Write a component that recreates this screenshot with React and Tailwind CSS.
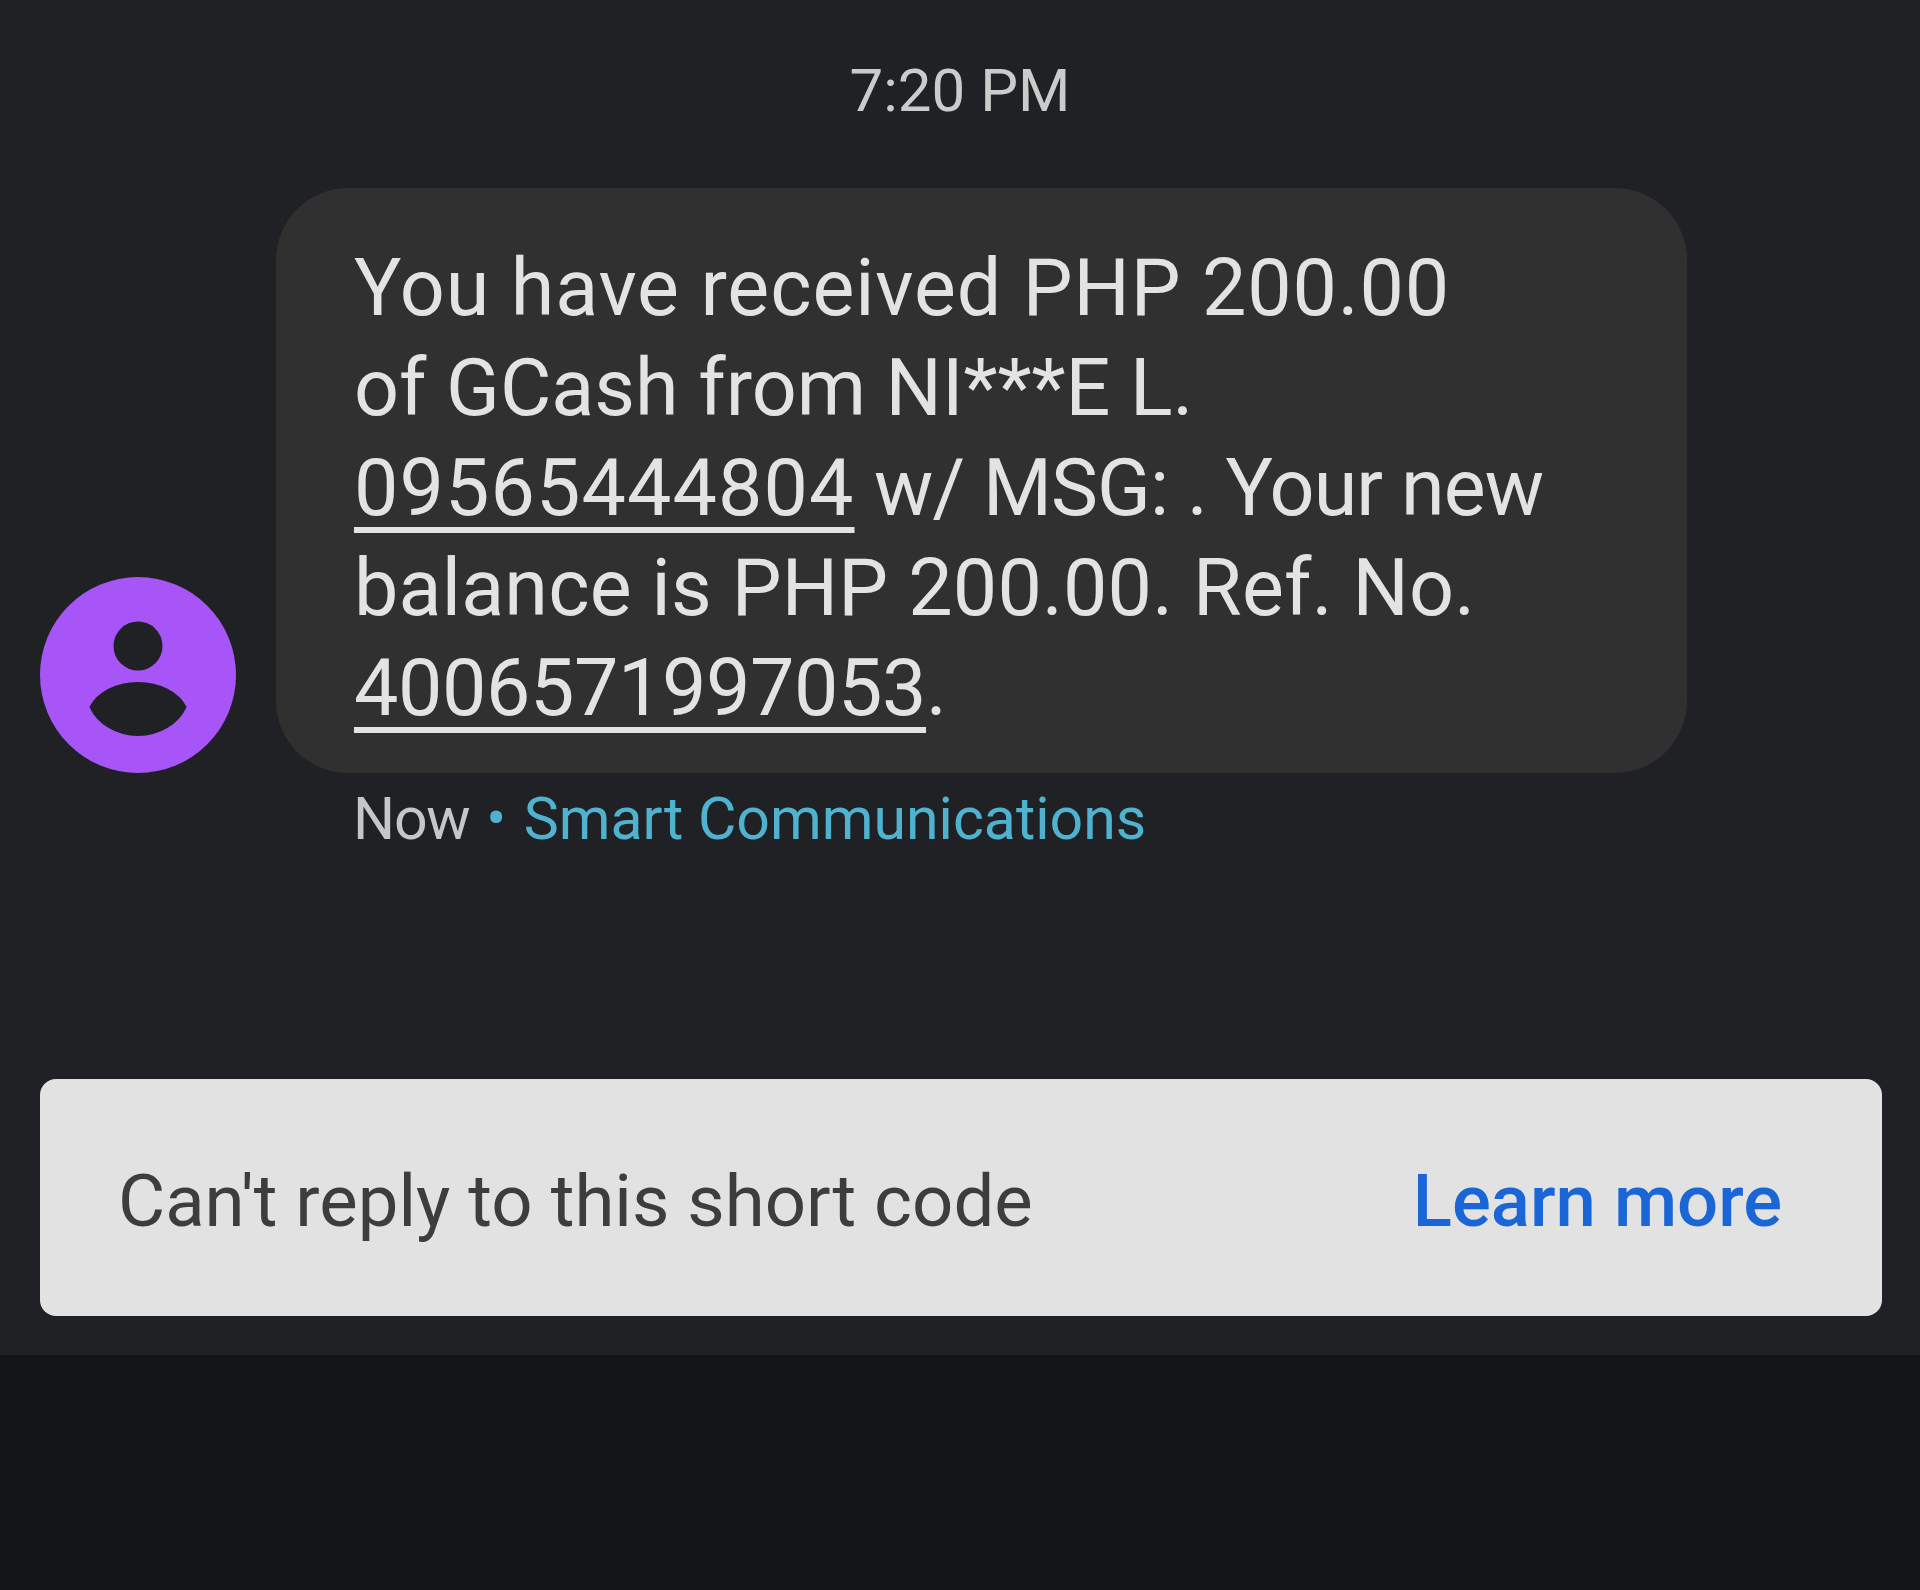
import React from 'react';

const numberLink = 'underline decoration-[6px] underline-offset-[12px] [text-decoration-skip-ink:none]';

function Avatar() {
    return (
        <svg viewBox="0 0 196 196" className="w-[196px] h-[196px] shrink-0">
            <circle cx="98" cy="98" r="98" fill="#a855f7" />
            <circle cx="98" cy="69" r="24.5" fill="#202124" />
            <path d="M50.5 130 C58 116 76 106 98 106 C120 106 138 116 145.5 130 C138 146 120 158 98 158 C76 158 58 146 50.5 130 Z" fill="#202124" stroke="#202124" strokeWidth="2" strokeLinejoin="round" />
        </svg>
    );
}

export default function App() {
    return (
        <div className="w-[1920px] h-[1590px] flex flex-col bg-[#131416] font-['Roboto',sans-serif]">
            <div className="h-[1355px] flex flex-col bg-[#202124]">
                {/* Time */}
                <div className="h-[188px] pt-[57px] text-center text-[60px] leading-[68px] text-[#c9cccb]">7:20 PM</div>

                {/* Message */}
                <div className="flex items-end pl-[40px] gap-[40px]">
                    <Avatar />
                    <div className="w-[1411px] h-[585px] rounded-[72px] bg-[#303030] pl-[78px] pt-[50px] text-[79px] leading-[100px] text-[#e3e3e3] whitespace-nowrap">
                        <span className="tracking-[0.9px]">You have received PHP 200.00</span><br />
                        of GCash from NI***E L.<br />
                        <span className={`${numberLink} tracking-[1.1px]`}>09565444804</span> <span className="tracking-[-0.9px]">w/ MSG: . Your new</span><br />
                        <span className="tracking-[0.2px]">balance is PHP 200.00. Ref. No.</span><br />
                        <span className={`${numberLink} tracking-[-0.4px]`}>4006571997053</span>.
                    </div>
                </div>
                <div className="pl-[353px] pt-[12px] text-[59px] leading-[68px] text-[#c4c7c5] whitespace-nowrap">
                    <span className="tracking-[-1.2px]">Now</span> <span className="text-[#4fb3cf] pl-[2px]"><span className="pr-[3px]">•</span> Smart Communications</span>
                </div>

                {/* Short code notice */}
                <div className="mt-[226px] ml-[40px] mr-[38px] h-[237px] rounded-[16px] bg-[#e2e2e2] flex items-center justify-between pl-[78px] pr-[100px] pt-[10px]">
                    <span className="text-[72.5px] text-[#3c3d3e]">Can't reply to this short code</span>
                    <span className="text-[72.5px] font-medium text-[#1a66d6]">Learn more</span>
                </div>
            </div>
        </div>
    );
}
